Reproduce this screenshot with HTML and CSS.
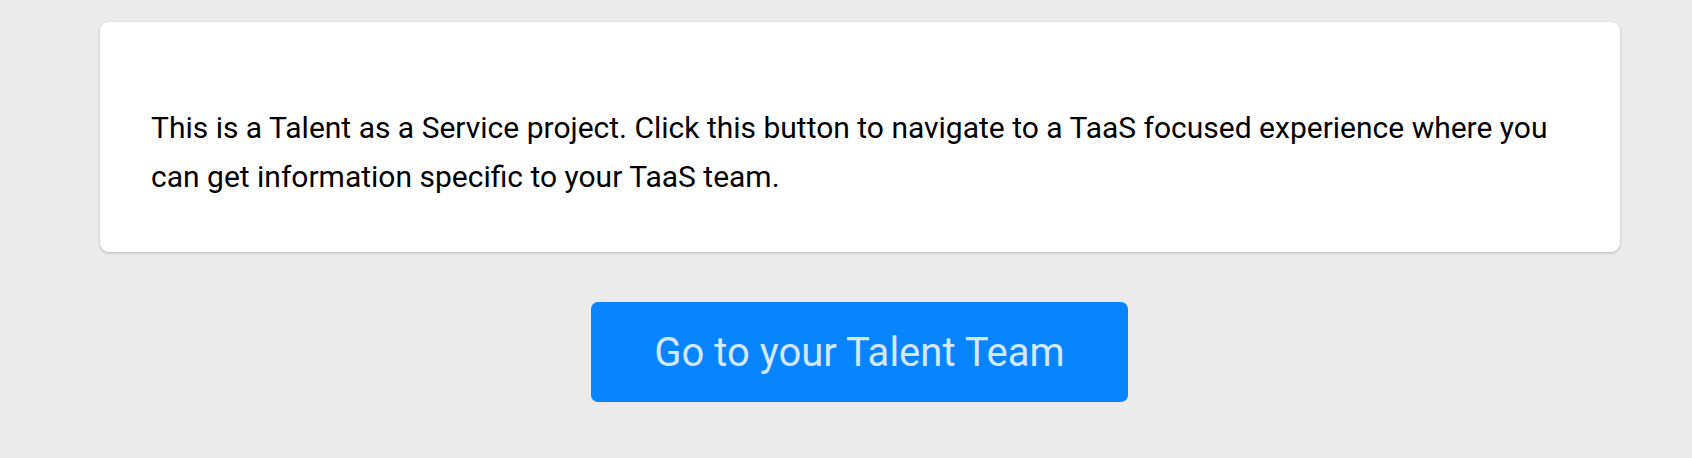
FILE: index.html
```html
<!DOCTYPE html>
<html>
<head>
<meta charset="utf-8">
<link rel="stylesheet" href="styles.css">
</head>
<body>
<div class="page">
  <div class="card">
    <p class="card-text">This is a Talent as a Service project. Click this button to navigate to a TaaS focused experience where you can get information specific to your TaaS team.</p>
  </div>
  <div class="actions">
    <button class="talent-btn">Go to your Talent Team</button>
  </div>
</div>
</body>
</html>
```
FILE: styles.css
```css
html, body {
  margin: 0;
  padding: 0;
  background: #ebebeb;
  font-family: Roboto, "Liberation Sans", Arial, sans-serif;
}
.page {
  width: 1692px;
  height: 458px;
  padding-top: 22px;
  box-sizing: border-box;
}
.card {
  margin: 0 72px 0 100px;
  height: 230px;
  box-sizing: border-box;
  background: #ffffff;
  border-radius: 9px;
  box-shadow: 0 1px 3px rgba(0, 0, 0, 0.22);
  padding: 81px 50px 0 51px;
}
.card-text {
  margin: 0;
  font-size: 30px;
  line-height: 49px;
  color: #000000;
}
.actions {
  display: flex;
  padding-left: 591px;
  margin-top: 50px;
}
.talent-btn {
  width: 537px;
  height: 100px;
  border: none;
  border-radius: 7px;
  background: #0884ff;
  color: #d3e8ff;
  font-family: Roboto, "Liberation Sans", Arial, sans-serif;
  font-size: 40px;
  padding: 0;
  cursor: pointer;
}
```
